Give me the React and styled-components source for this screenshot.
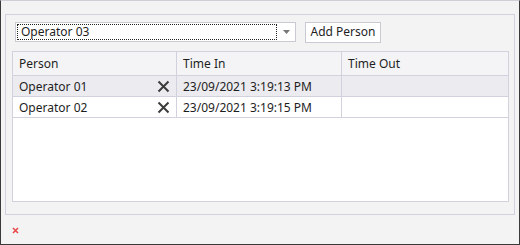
import React from 'react'
import styled, { createGlobalStyle } from 'styled-components'

const Global = createGlobalStyle`
  html, body { margin: 0; padding: 0; background: #f3f3f3; }
  body { font-family: "Noto Sans", "Open Sans", sans-serif; font-size: 12px; color: #1e1e1e; }
`

const Frame = styled.div`
  box-sizing: border-box;
  width: 520px;
  height: 245px;
  background: #f3f3f3;
  border: 1px solid #3a3a3a;
  border-top-color: #cfcfd6;
  display: flex;
  flex-direction: column;
`

const Group = styled.div`
  box-sizing: border-box;
  margin: 13px 4px 0 4px;
  height: 201px;
  border: 1px solid #d2d2de;
  padding: 6px 5px 12px 6px;
  display: flex;
  flex-direction: column;
`

const Toolbar = styled.div`
  display: flex;
  align-items: center;
  gap: 9px;
  padding-left: 3px;
  height: 22px;
  margin-bottom: 8px;
`

const Combo = styled.div`
  box-sizing: border-box;
  width: 281px;
  height: 20px;
  background: #fff;
  border: 1px solid #cacad4;
  display: flex;
  align-items: stretch;
`

const ComboText = styled.div`
  flex: 1;
  margin: 1px;
  border: 1px dotted #222;
  padding-left: 3px;
  display: flex;
  align-items: center;
  line-height: 1;
`

const ComboArrow = styled.div`
  width: 17px;
  display: flex;
  align-items: center;
  justify-content: center;
  svg { display: block; }
`

const Button = styled.button`
  box-sizing: border-box;
  height: 21px;
  width: 76px;
  background: #fff;
  border: 1px solid #cacad4;
  font: inherit;
  color: #1e1e1e;
  padding: 0;
  line-height: 1;
`

const Grid = styled.div`
  flex: 1;
  background: #fff;
  border: 1px solid #d2d2de;
  display: grid;
  grid-template-columns: 164px 165px 1fr;
  grid-auto-rows: 21px;
  align-content: start;
`

const Cell = styled.div`
  box-sizing: border-box;
  height: ${p => (p.$head ? 24 : 21)}px;
  background: ${p => (p.$head ? '#f4f4f6' : p.$alt ? '#ececf0' : '#fff')};
  border-right: ${p => (p.$last ? 'none' : '1px solid #d2d2de')};
  border-bottom: 1px solid #d2d2de;
  padding-left: 6px;
  padding-right: 6px;
  display: flex;
  align-items: center;
  justify-content: space-between;
  white-space: nowrap;
`

const HeadRow = styled.div`
  display: contents;
`

const Remove = styled.span`
  display: flex;
  align-items: center;
  svg { display: block; }
`

const Footer = styled.div`
  flex: 1;
  display: flex;
  align-items: center;
  padding-left: 11px;
  padding-top: 2px;
  svg { display: block; }
`

const rows = [
  { person: 'Operator 01', timeIn: '23/09/2021 3:19:13 PM', timeOut: '' },
  { person: 'Operator 02', timeIn: '23/09/2021 3:19:15 PM', timeOut: '' },
]

const Cross = () => (
  <svg width="13" height="13" viewBox="0 0 13 13">
    <path d="M1.5 1.5 L11.5 11.5 M11.5 1.5 L1.5 11.5" stroke="#3c3c3c" strokeWidth="2" />
  </svg>
)

export default function App() {
  return (
    <>
      <Global />
      <Frame>
        <Group>
          <Toolbar>
            <Combo>
              <ComboText>Operator 03</ComboText>
              <ComboArrow>
                <svg width="7" height="4" viewBox="0 0 7 4">
                  <path d="M0 0 H7 L3.5 4 Z" fill="#777" />
                </svg>
              </ComboArrow>
            </Combo>
            <Button>Add Person</Button>
          </Toolbar>
          <Grid style={{ gridTemplateRows: '24px' }}>
            <HeadRow>
              <Cell $head>Person</Cell>
              <Cell $head>Time In</Cell>
              <Cell $head $last>Time Out</Cell>
            </HeadRow>
            {rows.map((r, i) => (
              <HeadRow key={r.person}>
                <Cell $alt={i === 0}>
                  {r.person}
                  <Remove><Cross /></Remove>
                </Cell>
                <Cell $alt={i === 0}>{r.timeIn}</Cell>
                <Cell $alt={i === 0} $last>{r.timeOut}</Cell>
              </HeadRow>
            ))}
          </Grid>
        </Group>
        <Footer>
          <svg width="7" height="7" viewBox="0 0 7 7">
            <path d="M1 1 L6 6 M6 1 L1 6" stroke="#e84a4a" strokeWidth="1.6" />
          </svg>
        </Footer>
      </Frame>
    </>
  )
}
